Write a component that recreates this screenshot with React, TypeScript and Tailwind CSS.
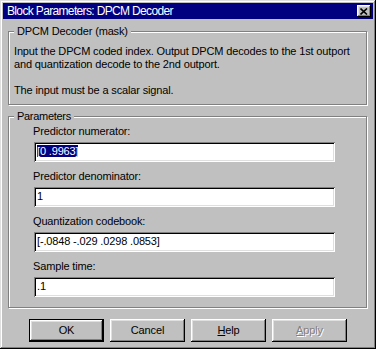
import React from 'react'

const bevelOut =
  'shadow-[inset_-1px_-1px_#000,inset_1px_1px_#fff,inset_-2px_-2px_#808080,inset_2px_2px_#dfdfdf]'
const sunken =
  'shadow-[inset_1px_1px_#808080,inset_-1px_-1px_#fff,inset_2px_2px_#000,inset_-2px_-2px_#dfdfdf]'

const Field = ({ label, value, selected }: { label: string; value: string; selected?: boolean }) => (
  <div className="flex flex-col">
    <div className="h-[13px] leading-[13px]">{label}</div>
    <div className={`mt-[4px] ml-[1px] h-[20px] w-[301px] bg-white pl-[3px] pt-[3px] leading-[13px] ${sunken}`}>
      {selected ? <span className="bg-[#000080] text-white">{value}</span> : value}
    </div>
  </div>
)

const Button = ({ children, isDefault, disabled }: { children: React.ReactNode; isDefault?: boolean; disabled?: boolean }) => (
  <div
    className={`flex h-[23px] w-[75px] items-center justify-center leading-[13px] ${
      isDefault ? 'border border-black ' : ''
    }${bevelOut} ${disabled ? 'text-[#808080] [text-shadow:1px_1px_0_#fff]' : 'text-black'}`}
  >
    {children}
  </div>
)

export default function App() {
  return (
    <div className="font-['Liberation_Sans',Arial,sans-serif] text-[11px] tracking-[-0.15px] text-black">
      <div className="flex h-[349px] w-[376px] flex-col bg-[#c0c0c0] p-[3px] shadow-[inset_-1px_-1px_#000,inset_1px_1px_#dfdfdf,inset_-2px_-2px_#808080,inset_2px_2px_#fff]">
        {/* title bar */}
        <div className="flex h-[16px] items-center justify-between bg-[#000080] pl-[4px] pr-[2px]">
          <span className="text-[12px] leading-[14px] tracking-[-0.65px] text-white">
            Block Parameters: DPCM Decoder
          </span>
          <div className={`flex h-[12px] w-[14px] items-center justify-center bg-[#c0c0c0] ${bevelOut}`}>
            <svg width="8" height="7" viewBox="0 0 8 7">
              <path d="M0.5 0.5 L7 6.5 M7 0.5 L0.5 6.5" stroke="#000" strokeWidth="1.6" fill="none" />
            </svg>
          </div>
        </div>

        {/* mask description */}
        <fieldset className="mt-[6px] ml-[5px] w-[359px] border border-[#808080] px-[5px] pt-[7px] pb-[7px] shadow-[inset_1px_1px_#fff,1px_1px_#fff]">
          <legend className="bg-[#c0c0c0] px-[3px] leading-[13px]">DPCM Decoder (mask)</legend>
          <p className="leading-[13px]">
            Input the DPCM coded index. Output DPCM decodes to the 1st outport
            <br />
            and quantization decode to the 2nd outport.
          </p>
          <p className="mt-[13px] leading-[13px]">The input must be a scalar signal.</p>
        </fieldset>

        {/* parameters */}
        <fieldset className="mt-[5px] ml-[5px] w-[359px] border border-[#808080] pl-[24px] pt-[2px] pb-[10px] shadow-[inset_1px_1px_#fff,1px_1px_#fff]">
          <legend className="-ml-[19px] bg-[#c0c0c0] px-[3px] leading-[13px] tracking-[-0.3px]">Parameters</legend>
          <div className="flex flex-col gap-[8px]">
            <Field label="Predictor numerator:" value="[0 .9963]" selected />
            <Field label="Predictor denominator:" value="1" />
            <Field label="Quantization codebook:" value="[-.0848 -.029 .0298 .0853]" />
            <Field label="Sample time:" value=".1" />
          </div>
        </fieldset>

        {/* buttons */}
        <div className="mt-[11px] flex gap-[6px] pl-[26px]">
          <Button isDefault>OK</Button>
          <Button>Cancel</Button>
          <Button>
            <span>
              <u className="underline-offset-[1px]">H</u>elp
            </span>
          </Button>
          <Button disabled>
            <span>
              <u className="underline-offset-[1px]">A</u>pply
            </span>
          </Button>
        </div>
      </div>
    </div>
  )
}
